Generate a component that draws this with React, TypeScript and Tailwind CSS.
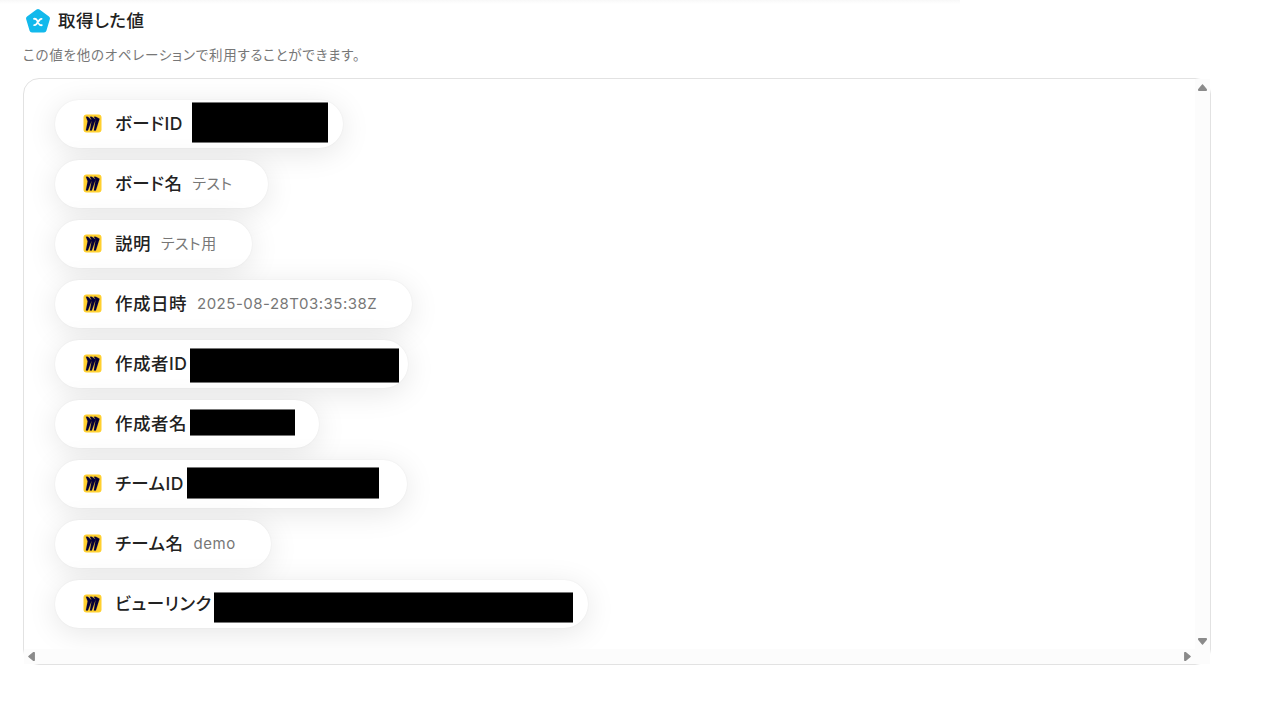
type Item = {
  label: string;
  width: string;
  value?: string;
  mask?: string;
};

const items: Item[] = [
  { label: "ボードID", width: "w-[288px]", mask: "left-[137px] top-[2px] h-[41px] w-[136px]" },
  { label: "ボード名", width: "w-[213px]", value: "テスト" },
  { label: "説明", width: "w-[197px]", value: "テスト用" },
  { label: "作成日時", width: "w-[357px]", value: "2025-08-28T03:35:38Z" },
  { label: "作成者ID", width: "w-[353px]", mask: "left-[135px] top-[8px] h-[35px] w-[209px]" },
  { label: "作成者名", width: "w-[264px]", mask: "left-[135px] top-[9px] h-[27px] w-[105px]" },
  { label: "チームID", width: "w-[352px]", mask: "left-[132px] top-[7px] h-[32px] w-[192px]" },
  { label: "チーム名", width: "w-[216px]", value: "demo" },
  { label: "ビューリンク", width: "w-[533px]", mask: "left-[159px] top-[12px] h-[31px] w-[359px]" },
];

function VariableIcon() {
  return (
    <svg className="size-[26px] shrink-0" viewBox="0 0 26 26">
      <path
        d="M13 3.5 22.5 10.4 19 22.1H7L3.5 10.4Z"
        fill="#12b9ec"
        stroke="#12b9ec"
        strokeWidth="5"
        strokeLinejoin="round"
      />
      <path
        d="M9 10.8c1.5-.3 2.2 0 2.9 1.3l2.2 4c.6 1 1.3 1.3 2.7 1.1M16.6 10.8c-.9 0-1.4.4-2 1.1l-3.2 4.2c-.6.7-1.1 1.1-2.2 1.1"
        fill="none"
        stroke="#fff"
        strokeWidth="1.8"
        strokeLinecap="round"
      />
    </svg>
  );
}

function MiroIcon() {
  return (
    <svg className="mb-px size-[19px] shrink-0" viewBox="0 0 19 19">
      <rect x="0.5" y="0.5" width="18" height="18" rx="3" fill="#ffd02f" />
      <path
        transform="translate(2.9 2.7) scale(.57 .57)"
        d="M17.392 0H13.9L17 4.808 10.444 0H6.949l3.102 6.3L3.494 0H0l3.05 8.131L0 24h3.494L10.05 6.985 6.949 24h3.494L17 5.494 13.899 24h3.493L24 3.672 17.392 0z"
        fill="#050038"
        stroke="#050038"
        strokeWidth="0.3"
      />
    </svg>
  );
}

function Arrow({ className = "" }: { className?: string }) {
  return (
    <svg className={`h-[7px] w-[9px] ${className}`} viewBox="0 0 9 7">
      <path
        d="M4.5.8 8.3 5.3v1H.7v-1Z"
        fill="#8b8b8b"
        stroke="#8b8b8b"
        strokeWidth="1.2"
        strokeLinejoin="round"
      />
    </svg>
  );
}

function Pill({ label, width, value, mask }: Item) {
  return (
    <li
      className={`relative flex h-12 items-center rounded-full bg-white pl-7 shadow-[0_0_2px_rgba(0,0,0,0.06),0_5px_30px_rgba(0,0,0,0.1)] ${width}`}
    >
      <MiroIcon />
      <span className="mb-px ml-[13px] text-[17.5px] leading-6 font-medium tracking-[0.5px] whitespace-nowrap text-[#222]">
        {label}
      </span>
      {value && (
        <span className="ml-2.5 pb-px text-[15px] leading-6 tracking-[0.5px] whitespace-nowrap text-[#777]">
          {value}
        </span>
      )}
      {mask && <span className={`absolute border-y border-[#777] bg-black ${mask}`} />}
    </li>
  );
}

export default function App() {
  return (
    <main className="h-[706px] w-[1264px] overflow-hidden bg-white font-[Inter,'Noto_Sans_CJK_JP',sans-serif] [font-feature-settings:'palt']">
      <div className="h-1 w-[960px] bg-gradient-to-b from-[#f8f8f8] to-white" />
      <div className="px-[23px] pt-1">
        <h1 className="flex h-[26px] items-center gap-[7px] pl-0.5 text-[17.5px] font-medium tracking-[0.5px] text-[#222]">
          <VariableIcon />
          取得した値
        </h1>
        <p className="mt-[11px] h-5 text-[13.5px] leading-5 tracking-[0.76px] text-[#777]">
          この値を他のオペレーションで利用することができます。
        </p>
        <section className="mt-[13px] grid h-[587px] w-[1188px] grid-cols-[1fr_15px] grid-rows-[1fr_15px] rounded-2xl border border-[#e2e2e2]">
          <ul className="flex flex-col items-start gap-3 overflow-hidden rounded-tl-2xl pt-[21px] pl-[31px]">
            {items.map((item) => (
              <Pill key={item.label} {...item} />
            ))}
          </ul>
          <div className="flex flex-col items-center justify-between bg-[#fcfcfc] pt-[5px] pb-1">
            <Arrow />
            <Arrow className="rotate-180" />
          </div>
          <div className="flex items-center justify-between bg-[#fcfcfc] pr-[3px] pl-[3px]">
            <Arrow className="-rotate-90" />
            <Arrow className="rotate-90" />
          </div>
          <div className="bg-[#fcfcfc]" />
        </section>
      </div>
    </main>
  );
}
